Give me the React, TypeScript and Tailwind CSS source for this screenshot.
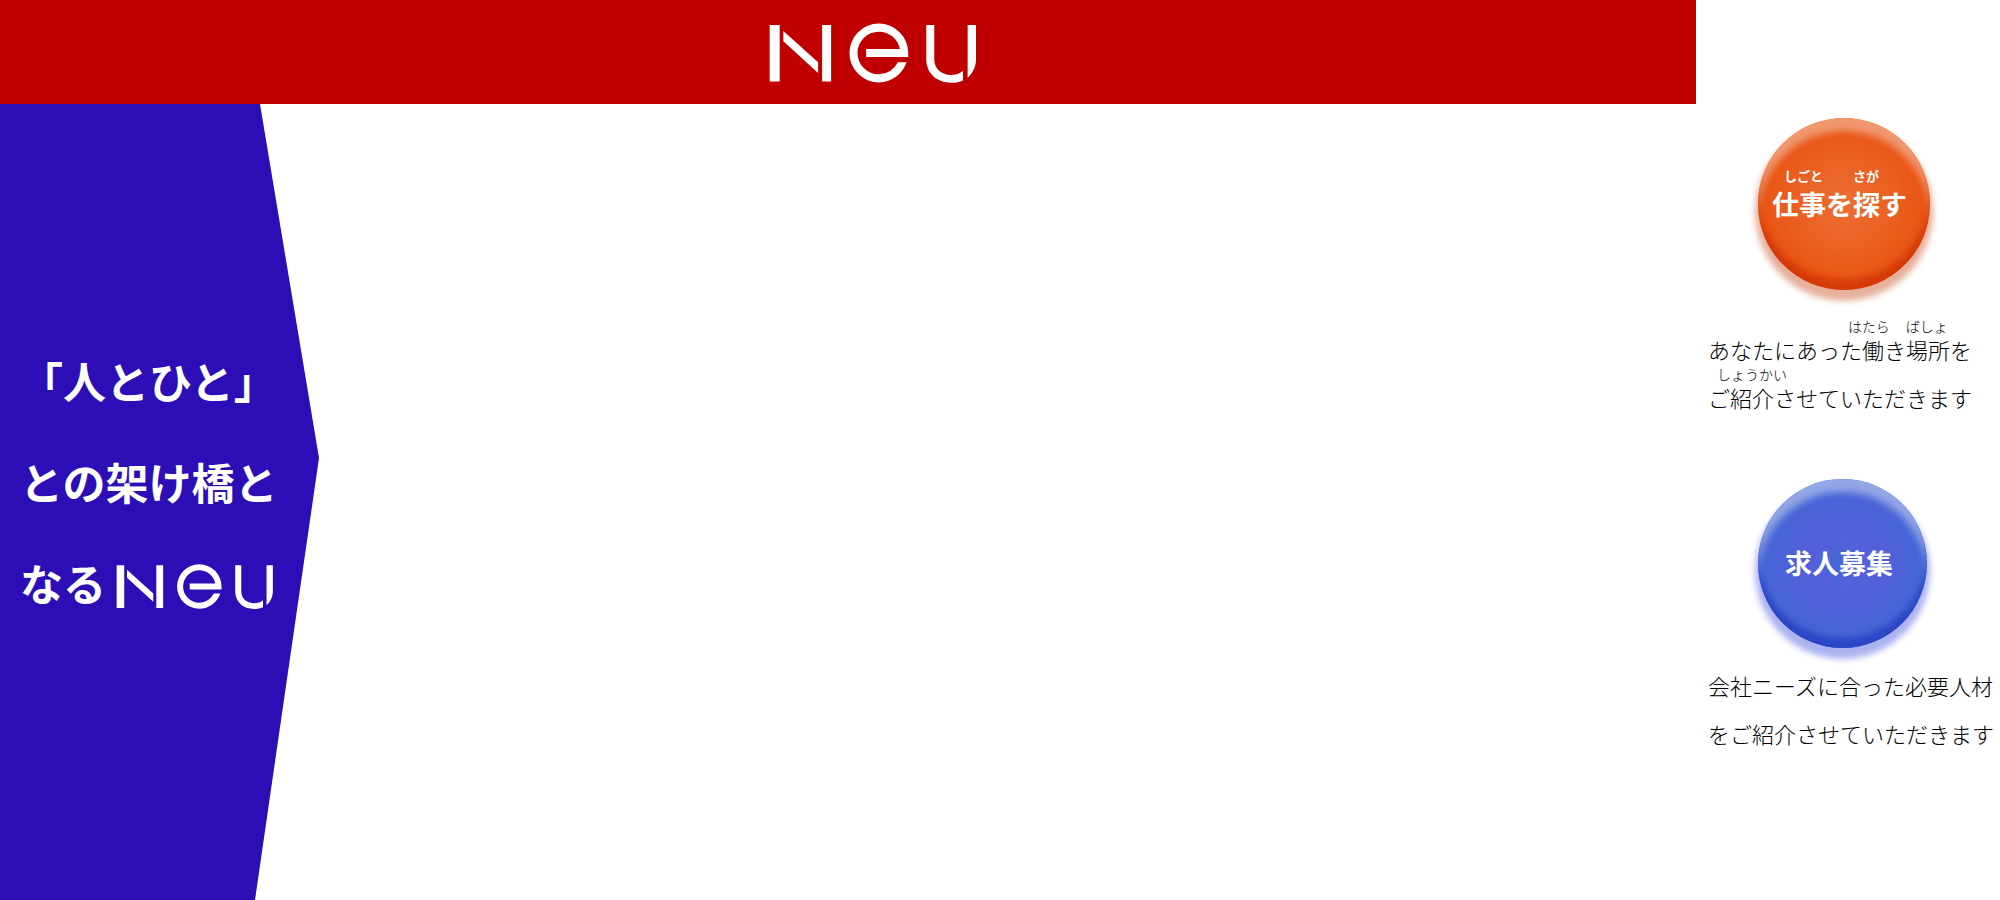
function NeuLogo({ className }: { className: string }) {
  return (
    <svg viewBox="88 70 620 178" className={className} fill="#fff" role="img" aria-label="Neu">
      <path d="M90 75H120V244H90ZM247 75H274V244H247ZM131 93L235 187V219L131 124Z" />
      <path d="M379 147H480A64 64 0 0 0 417 95A64 64 0 0 0 353 159A64 64 0 0 0 417 223A64 64 0 0 0 474 187H500A88 88 0 0 1 417 247A88 88 0 0 1 329 159A88 88 0 0 1 417 71A88 88 0 0 1 505 159V171H379Z" />
      <path d="M559 75H583V178C583 207 605 225 633 225C648 225 660 220 669 213V241C659 246 648 248 635 248C590 248 559 220 559 178Z" />
      <path d="M683 75H708V178C708 200 698 220 683 233Z" />
    </svg>
  );
}

export default function App() {
  return (
    <div className="flex min-h-screen bg-white font-['Noto_Sans_CJK_JP',sans-serif] text-black">
      <div className="flex min-w-0 flex-1 flex-col">
        <header className="flex h-[104px] items-center justify-center bg-[#c00000] pt-[2px] pl-12">
          <NeuLogo className="h-[60px] w-[207px]" />
        </header>
        <main className="flex flex-1">
          <section className="w-[319px] bg-[#2d0db6] pt-[226px] pl-5 [clip-path:polygon(0_0,260px_0,100%_354px,255px_100%,0_100%)]">
            <h1 className="text-[43px] leading-[101px] font-bold whitespace-nowrap text-white">
              <span className="block">「人とひと」</span>
              <span className="block">との架け橋と</span>
              <span className="flex items-center gap-[10px]">
                なる
                <NeuLogo className="mt-2 h-[45px] w-[157px]" />
              </span>
            </h1>
          </section>
        </main>
      </div>

      <aside className="w-[304px] shrink-0 overflow-hidden pt-[118px] pl-3 whitespace-nowrap">
        <button
          type="button"
          className="ml-[50px] flex size-[172px] flex-col items-start rounded-full bg-[radial-gradient(circle,#ee6e32_0%,#ea6022_40%,#e95513_65%)] pt-[45px] pl-[14px] font-bold text-white shadow-[inset_0_-10px_6px_#d43a08,inset_0_13px_7px_#f09870,0_8px_6px_3px_#e6b09b]"
        >
          <span className="flex gap-[30px] pl-[12px] text-[13px] leading-[26px]">
            <span>しごと</span>
            <span>さが</span>
          </span>
          <span className="text-[27px] leading-[30px]">仕事を探す</span>
        </button>
        <div className="mt-[23px] font-light">
          <p className="flex h-6 gap-4 pl-[140px] text-[14px] leading-[26px]">
            <span>はたら</span>
            <span>ばしょ</span>
          </p>
          <p className="text-[22px] leading-6">あなたにあった働き場所を</p>
          <p className="h-6 pl-[9px] text-[14px] leading-[26px]">しょうかい</p>
          <p className="text-[22px] leading-6">ご紹介させていただきます</p>
        </div>

        <button
          type="button"
          className="mt-[70px] ml-[50px] flex size-[169px] items-center rounded-full bg-[radial-gradient(circle,#3f6bd8_0%,#5560da_22%,#5060d9_40%,#4666d6_62%)] pl-[27px] text-[27px] font-bold text-white shadow-[inset_0_-10px_6px_#2b46c6,inset_0_13px_7px_#93a6e6,0_8px_6px_3px_#abb2f0]"
        >
          求人募集
        </button>
        <p className="mt-[13px] text-[22px] leading-[48px] font-light">
          会社ニーズに合った必要人材
          <br />
          をご紹介させていただきます
        </p>
      </aside>
    </div>
  );
}
